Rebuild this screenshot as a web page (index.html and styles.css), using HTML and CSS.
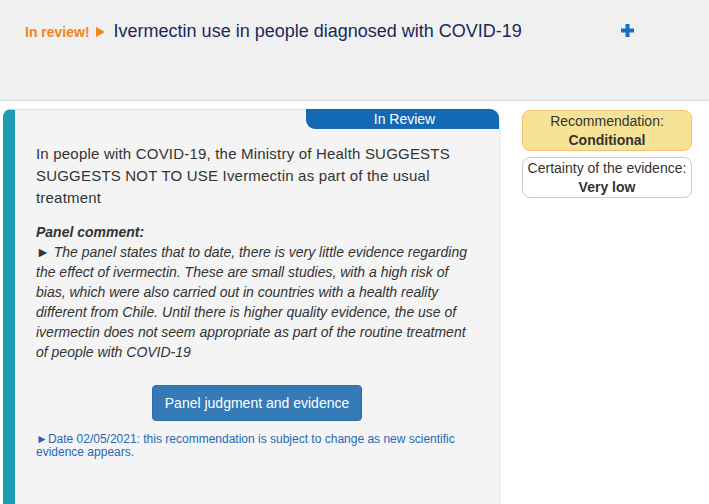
FILE: index.html
```html
<!DOCTYPE html>
<html>
<head>
<meta charset="utf-8">
<link rel="stylesheet" href="styles.css">
</head>
<body>
<header class="top">
  <div class="title-row">
    <span class="flag">In review!</span>
    <svg class="arrow" width="9" height="10" viewBox="0 0 9 10"><polygon points="0,0 9,5 0,10" fill="#f7821b"/></svg>
    <h1 class="title">Ivermectin use in people diagnosed with COVID-19</h1>
    <svg class="plus" width="13" height="13" viewBox="0 0 13 13"><rect x="4.5" y="0" width="4" height="13" fill="#1a6fc0"/><rect x="0" y="4.5" width="13" height="4" fill="#1a6fc0"/></svg>
  </div>
</header>
<main class="content">
  <section class="card">
    <div class="tab-row"><span class="tab">In Review</span></div>
    <p class="rec">In people with COVID-19, the Ministry of Health SUGGESTS SUGGESTS NOT TO USE Ivermectin as part of the usual treatment</p>
    <div class="comment">
      <div class="comment-title">Panel comment:</div>
      <div class="comment-body">&#9658; The panel states that to date, there is very little evidence regarding the effect of ivermectin. These are small studies, with a high risk of bias, which were also carried out in countries with a health reality different from Chile. Until there is higher quality evidence, the use of ivermectin does not seem appropriate as part of the routine treatment of people with COVID-19</div>
    </div>
    <div class="btn-row"><button class="btn">Panel judgment and evidence</button></div>
    <p class="note">&#9658;Date 02/05/2021: this recommendation is subject to change as new scientific evidence appears.</p>
  </section>
  <aside class="side">
    <div class="box box-rec">Recommendation:<br><b>Conditional</b></div>
    <div class="box box-cert">Certainty of the evidence:<br><b>Very low</b></div>
  </aside>
</main>
</body>
</html>
```
FILE: styles.css
```css
html, body {
  margin: 0;
  padding: 0;
  background: #fff;
  font-family: "Liberation Sans", Arial, sans-serif;
  color: #333;
}
.top {
  background: #f0f0f0;
  height: 101px;
  border-bottom: 1px solid #dcdcdc;
  box-sizing: border-box;
}
.title-row {
  display: flex;
  align-items: center;
  padding: 20px 0 0 25px;
  height: 22px;
}
.flag {
  color: #f7821b;
  font-weight: bold;
  font-size: 14px;
  margin-top: 2px;
}
.arrow {
  margin: 2px 9px 0 6px;
}
.title {
  margin: 0;
  font-weight: normal;
  font-size: 18px;
  color: #1b2858;
}
.plus {
  margin-left: 99px;
  margin-top: -1px;
}
.content {
  display: flex;
  align-items: flex-start;
  padding: 8px 0 0 3px;
}
.card {
  width: 484px;
  height: 394px;
  background: #f4f4f4;
  border-left: 12px solid #1e9db2;
  border-top: 1px solid #e2e2e2;
  border-radius: 8px 10px 0 0;
  box-shadow: 1px 0 2px rgba(0,0,0,0.12);
}
.tab-row {
  display: flex;
  justify-content: flex-end;
  margin-top: -1px;
}
.tab {
  width: 193px;
  height: 20px;
  line-height: 20px;
  background: #1369b3;
  color: #fff;
  font-size: 14px;
  text-align: center;
  border-radius: 0 9px 0 9px;
  padding-left: 4px;
  box-sizing: border-box;
}
.rec {
  margin: 14px 30px 0 21px;
  font-size: 15px;
  line-height: 22px;
  letter-spacing: 0.2px;
  color: #333;
}
.comment {
  margin: 13px 25px 0 21px;
  font-size: 14px;
  line-height: 20px;
  font-style: italic;
  color: #333;
}
.comment-title {
  font-weight: bold;
}
.btn-row {
  display: flex;
  justify-content: center;
  margin-top: 23px;
}
.btn {
  width: 210px;
  height: 36px;
  background: #337ab7;
  color: #fff;
  border: 1px solid #2e6da4;
  border-radius: 4px;
  font-family: "Liberation Sans", Arial, sans-serif;
  font-size: 14px;
  padding: 0;
}
.note {
  margin: 12px 40px 0 21px;
  font-size: 12px;
  line-height: 13px;
  color: #2868b3;
}
.side {
  margin-left: 23px;
  margin-top: 1px;
  width: 170px;
  display: flex;
  flex-direction: column;
  gap: 6px;
}
.box {
  border-radius: 8px;
  text-align: center;
  font-size: 14px;
  line-height: 19px;
  padding: 1px 0 0;
  color: #333;
}
.box-rec {
  background: #f7e396;
  border: 1px solid #f1c46d;
}
.box-cert {
  background: #fff;
  border: 1px solid #cccccc;
}
```
